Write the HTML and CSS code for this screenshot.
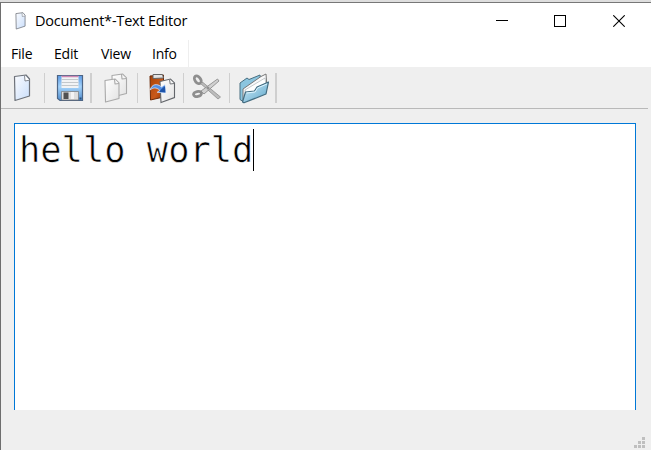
FILE: index.html
```html
<!DOCTYPE html>
<html lang="en">
<head>
<meta charset="utf-8">
<title>Document*-Text Editor</title>
<link rel="stylesheet" href="styles.css">
</head>
<body>
<svg class="defs" width="0" height="0" aria-hidden="true">
  <defs>
    <linearGradient id="paper" x1="0" y1="0" x2="1" y2="1"><stop offset="0" stop-color="#fbfcff"/><stop offset="1" stop-color="#c9defb"/></linearGradient>
    <linearGradient id="white" x1="0" y1="0" x2="1" y2="1"><stop offset="0" stop-color="#fff"/><stop offset="1" stop-color="#e2e2e2"/></linearGradient>
    <linearGradient id="disk" x1="0" y1="0" x2="0" y2="1"><stop offset="0" stop-color="#5d9be6"/><stop offset=".45" stop-color="#a5d4fb"/><stop offset="1" stop-color="#4f8ccd"/></linearGradient>
    <linearGradient id="board" x1="0" y1="0" x2="1" y2="1"><stop offset="0" stop-color="#a84308"/><stop offset=".6" stop-color="#c9591a"/><stop offset="1" stop-color="#8f3a08"/></linearGradient>
    <linearGradient id="folder" x1="0" y1="0" x2="1" y2="1"><stop offset="0" stop-color="#d4effb"/><stop offset="1" stop-color="#5ba5c9"/></linearGradient>
    <symbol id="page" viewBox="0 0 18 28">
      <path d="M1.5 2.5 13 1l3.5 4v17L2 26.5Z" fill="url(#paper)" stroke="#6d727a" stroke-width="1.2" stroke-linejoin="round"/>
      <path d="M11.5 1.3 12 7l4.5-.8" fill="#fff" stroke="#777c84" stroke-width=".9"/>
    </symbol>
  </defs>
</svg>
<div class="window">
  <header class="titlebar">
    <svg class="app-icon" width="11" height="18" viewBox="0 0 18 28" preserveAspectRatio="none"><use href="#page" width="18" height="28"/></svg>
    <span class="title">Document*-Text Editor</span>
    <div class="controls">
      <svg width="12" height="12" shape-rendering="crispEdges"><path d="M0 5.5h12" stroke="#000"/></svg>
      <svg width="12" height="12" shape-rendering="crispEdges"><path d="M.5.5h11v11H.5Z" fill="none" stroke="#000"/></svg>
      <svg class="close" width="12" height="12"><path d="m.3.3 11.4 11.4M11.7.3.3 11.7" stroke="#000" stroke-width="1.1"/></svg>
    </div>
  </header>
  <nav class="menubar">
    <span class="file">File</span><span class="edit">Edit</span><span class="view">View</span><span class="info">Info</span>
  </nav>
  <div class="toolbar">
    <div class="tool new"><svg width="18" height="28"><use href="#page" width="18" height="28"/></svg></div>
    <div class="tool save"><svg width="28" height="28" viewBox="0 0 28 28">
      <path d="M1.5 1.5h25v25H4l-2.500-2Z" fill="url(#disk)" stroke="#4d6585" stroke-width="1.2"/>
      <path d="M5.500 2h17v12h-17Z" fill="#f1f3f5"/>
      <path d="M5.500 2.500h17" stroke="#cf87b3" stroke-width="1.500"/>
      <path d="M5.500 5.500h17M5.500 8.500h17M5.500 11.500h17" stroke="#c3c8cc"/>
      <path d="M5.500 17.500h17v8.500h-17Z" fill="#dedede" stroke="#777" stroke-width=".7"/>
      <path d="M7.500 18.500h5V25h-5Z" fill="#515151"/><path d="M15 18h3v7h-3Z" fill="#f4f4f4"/><path d="M23.500 23.500h2v2h-2Z" fill="#29517f"/>
    </svg></div>
    <div class="tool copy"><svg width="26" height="32" viewBox="0 0 26 32">
      <g fill="url(#white)" stroke="#a9a9a9" stroke-width="1.100" stroke-linejoin="round">
        <path d="M9 3.500 19.500 2l4 4v15.500L9.500 25Z"/><path d="m18.500 2 .500 5 4.500-.500" fill="#f5f5f5"/>
        <path d="M2 8.500 12 7l4 4v15.500L2.500 30Z"/><path d="m11.500 7 .500 5 4-.500" fill="#f7f7f7"/>
      </g>
    </svg></div>
    <div class="tool paste"><svg width="28" height="32" viewBox="0 0 28 32">
      <path d="M2 4 15.500 3v22L2.500 28Z" fill="url(#board)" stroke="#6c2a08"/>
      <path d="M5 2.500h9.500L15.500 6l-10.500.500Z" fill="#e4e4e4" stroke="#646464"/>
      <path d="m12 9.500 10.500-2.500 4 4v14.500L13 30.500Z" fill="url(#white)" stroke="#62656a" stroke-width="1.100"/>
      <path d="m21.500 7.300.7 4.700 4-.5" fill="#f7f7f7" stroke="#72757a"/>
      <path d="M2 18C4 12 9 11 13.500 15L17 12.500l.7 8.500-8.500-.7 2.500-2C8.500 15 5 15.500 2 18Z" fill="#5590e4" stroke="#e6f0ff" stroke-width=".7"/>
      <path d="m12.500 18 4.500-4 .5 6.500-6-.5Z" fill="#1d54aa"/>
    </svg></div>
    <div class="tool"><svg width="30" height="28" viewBox="0 0 30 28">
      <g fill="none" stroke="#8e8e8e" stroke-width="2.800">
        <ellipse cx="5.800" cy="5.800" rx="2.800" ry="4.300" transform="rotate(-38 5.800 5.800)"/>
        <ellipse cx="5.500" cy="20" rx="4" ry="2.500" transform="rotate(-12 5.500 20)"/>
      </g>
      <path d="m8 9 3-.5 17.500 14.500-2.500 2Z" fill="#bcbcbc" stroke="#858585" stroke-width=".7"/>
      <path d="m9 17 16.500-12 1.500 2L12 20Z" fill="#d0d0d0" stroke="#858585" stroke-width=".8"/>
      <circle cx="16" cy="14" r="1.500" fill="#919191"/>
    </svg></div>
    <div class="tool open"><svg width="32" height="32" viewBox="0 0 32 32">
      <path d="M2 11 9 6l2 1.500L22 3l2 15L5 29.500l-3-2Z" fill="#8bc5df" stroke="#486e80"/>
      <path d="M5 17 23 4.500 28 2l1 14-18 9-6 4Z" fill="#f8f9fa" stroke="#777"/>
      <path d="m7 18 20-12 1 7L8 23Z" fill="#fff" stroke="#aeb5b8" stroke-width=".7"/>
      <path d="M4.500 30 7.500 20l9-1L19 15l11.500-5L28 22 6 30.800Z" fill="url(#folder)" stroke="#436c80" stroke-width="1.200" stroke-linejoin="round"/>
      <path d="m8.500 21 8.600-1L19.500 16l9.500-4" fill="none" stroke="#ddf5ff"/>
    </svg></div>
  </div>
  <main class="workspace">
    <div class="editor"><span class="text">hello world</span><i class="caret"></i></div>
  </main>
  <footer class="statusbar"><svg width="11" height="11" shape-rendering="crispEdges"><path d="M8 0h3v3H8ZM4 4h3v3H4ZM8 4h3v3H8ZM0 8h3v3H0ZM4 8h3v3H4ZM8 8h3v3H8Z" fill="#bfbfbf"/></svg></footer>
</div>
</body>
</html>
```
FILE: styles.css
```css
* { box-sizing: border-box; }
body { margin: 0; width: 651px; height: 450px; overflow: hidden; background: #dedede; font-family: "Open Sans", "Noto Sans", sans-serif; color: #000; }
svg { display: block; flex: none; }
.defs { position: absolute; }
.window { margin-top: 2px; height: 448px; display: flex; flex-direction: column; border-top: 1px solid #777; border-left: 1px solid #6e6e6e; background: #efefef; }
.titlebar { height: 37px; display: flex; align-items: center; padding: 0 26px 1px 14px; background: #fff; }
.title { margin-left: 9px; font-size: 14.5px; letter-spacing: -0.2px; line-height: 20px; white-space: nowrap; }
.controls { margin-left: auto; display: flex; gap: 46px; }
.close { margin-left: 1px; }
.menubar { height: 27px; display: flex; background: #fff; font-size: 14px; line-height: 27px; letter-spacing: -0.2px; }
.menubar span { white-space: nowrap; }
.file { width: 53px; padding-left: 10px; }
.edit { width: 47px; }
.view { width: 51px; }
.info { width: 37px; border-right: 1px solid #eee; }
.toolbar { height: 42px; width: 647px; display: flex; padding-top: 6px; border-bottom: 1px solid #b9b9b9; }
.tool { flex: none; width: 46px; height: 30px; display: flex; align-items: center; justify-content: center; border-right: 1px solid #cfcfcf; }
.tool.new { width: 44px; padding-right: 2px; }
.tool.save { width: 47px; padding-left: 4px; border-right-width: 2px; }
.tool.copy { padding-left: 2px; }
.tool.paste { padding-left: 3px; }
.tool.open { width: 47px; padding-left: 3px; border-right-width: 2px; }
.workspace { padding: 14px 15px 0 13px; height: 301px; flex: none; }
.editor { height: 287px; display: flex; align-items: flex-start; padding: 5px 0 0 4px; background: #fff; border: 1px solid #0078d7; border-bottom: 0; }
.text { font-family: "DejaVu Sans Mono", monospace; font-size: 35.4px; line-height: 42px; white-space: pre; -webkit-text-stroke: 0.6px #fff; }
.caret { width: 1px; height: 42px; background: #000; }
.statusbar { flex: 1; display: flex; align-items: flex-end; justify-content: flex-end; padding: 0 6px 2px 0; }
```
